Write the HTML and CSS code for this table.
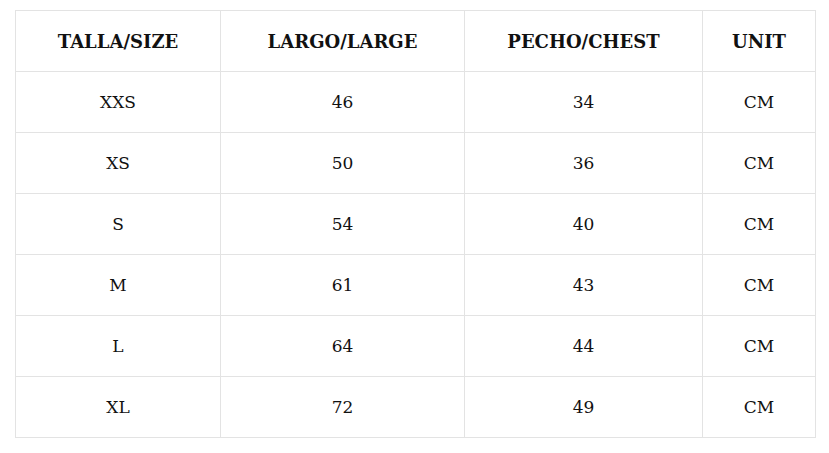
FILE: index.html
```html
<!DOCTYPE html>
<html>
<head>
<meta charset="utf-8">
<link rel="stylesheet" href="styles.css">
</head>
<body>
<table class="sizes">
  <colgroup>
    <col class="c1"><col class="c2"><col class="c3"><col class="c4">
  </colgroup>
  <thead>
    <tr><th>TALLA/SIZE</th><th>LARGO/LARGE</th><th>PECHO/CHEST</th><th>UNIT</th></tr>
  </thead>
  <tbody>
    <tr><td>XXS</td><td>46</td><td>34</td><td>CM</td></tr>
    <tr><td>XS</td><td>50</td><td>36</td><td>CM</td></tr>
    <tr><td>S</td><td>54</td><td>40</td><td>CM</td></tr>
    <tr><td>M</td><td>61</td><td>43</td><td>CM</td></tr>
    <tr><td>L</td><td>64</td><td>44</td><td>CM</td></tr>
    <tr><td>XL</td><td>72</td><td>49</td><td>CM</td></tr>
  </tbody>
</table>
</body>
</html>
```
FILE: styles.css
```css
html, body {
  margin: 0;
  background: #ffffff;
}
body {
  padding: 10px 0 0 15px;
  font-family: "DejaVu Serif", "Liberation Serif", serif;
  color: #111111;
}
.sizes {
  border-collapse: collapse;
  table-layout: fixed;
  width: 800px;
}
.c1 { width: 205px; }
.c2 { width: 244px; }
.c3 { width: 238px; }
.c4 { width: 113px; }
.sizes th, .sizes td {
  border: 1px solid #e3e3e3;
  height: 60px;
  padding: 0;
  text-align: center;
  vertical-align: middle;
}
.sizes th {
  font-size: 18px;
  font-weight: bold;
}
.sizes td {
  font-size: 17px;
}
```
